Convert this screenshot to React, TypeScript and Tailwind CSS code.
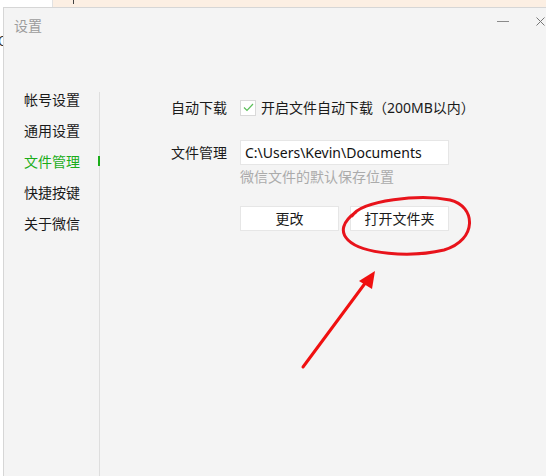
import React from "react";

const cjk = { fontFamily: '"Noto Sans CJK SC", "Noto Sans", sans-serif' };
const latin = { fontFamily: '"Noto Sans", "Noto Sans CJK SC", sans-serif' };

const menu = ["帐号设置", "通用设置", "文件管理", "快捷按键", "关于微信"];

function Annotation() {
  return (
    <svg
      className="pointer-events-none absolute left-0 top-0"
      width="546"
      height="476"
      viewBox="0 0 546 476"
    >
      <path
        d="M 352 216 C 362 200, 420 194, 450 200 C 476 206, 478 240, 444 250 C 410 258, 362 254, 348 240 C 340 232, 342 222, 356 212"
        fill="none"
        stroke="#e8131b"
        strokeWidth="3"
        strokeLinecap="round"
      />
      <line x1="303" y1="367" x2="366" y2="282" stroke="#f01010" strokeWidth="3" strokeLinecap="round" />
      <polygon points="375,271 359,281 372,289" fill="#f01010" />
    </svg>
  );
}

export default function App() {
  return (
    <div className="relative flex h-[476px] w-[546px] flex-col overflow-hidden bg-white text-[14px] text-[#1a1a1a]" style={cjk}>
      {/* window behind */}
      <div className="flex h-[7px]">
        <div className="w-[53px] border-r border-[#e2e2e2] bg-white" />
        <div className="flex-1 bg-[#fcefe3] pl-[20px]">
          <div className="h-[4px] w-px bg-[#444]" />
        </div>
      </div>

      <div className="flex flex-1">
        <div className="w-[3px] overflow-hidden bg-white">
          <div className="-ml-[2px] mt-[27px] text-[13px] leading-[14px] text-[#333]">C</div>
        </div>

        {/* settings window */}
        <div className="flex flex-1 flex-col border-l border-t border-[#d6d6d6] bg-[#f4f4f4]">
          <div className="flex h-[30px] items-start justify-between pl-[10px] pr-[1px] pt-[9px]">
            <span className="text-[14px] leading-[16px] text-[#9c9c9c]">设置</span>
            <div className="flex items-center gap-[27px] pt-[0px]">
              <div className="h-px w-[12px] bg-[#8a8a8a]" />
              <svg width="9" height="9" viewBox="0 0 9 9">
                <path d="M0.5 0.5 L8.5 8.5 M8.5 0.5 L0.5 8.5" stroke="#777" strokeWidth="1" />
              </svg>
            </div>
          </div>

          <div className="flex flex-1 pt-[54px]">
            <div className="flex w-[96px] flex-col gap-[17px] border-r border-[#dedede] pl-[20px]">
              {menu.map((m) => (
                <div
                  key={m}
                  className={`relative h-[14px] leading-[14px] ${m === "文件管理" ? "text-[#1aad19]" : "text-[#1a1a1a]"}`}
                >
                  {m}
                  {m === "文件管理" && (
                    <div className="absolute right-[-1px] top-[2px] h-[10px] w-[2px] bg-[#1aad19]" />
                  )}
                </div>
              ))}
            </div>

            <div className="flex flex-col pl-[71px] pt-[7px]">
              <div className="flex h-[17px] items-center">
                <span className="w-[69px]">自动下载</span>
                <div className="flex h-[16px] w-[16px] items-center justify-center border border-[#d9d9d9] bg-white">
                  <svg width="11" height="9" viewBox="0 0 11 9">
                    <path d="M1 4.5 L4 7.5 L10 1" fill="none" stroke="#5cbf5a" strokeWidth="1.2" />
                  </svg>
                </div>
                <span className="ml-[5px]">
                  开启文件自动下载（<span style={latin}>200MB</span>以内）
                </span>
              </div>

              <div className="mt-[24px] flex items-center">
                <span className="w-[69px]">文件管理</span>
                <div className="flex h-[25px] w-[209px] items-center border border-[#e6e6e6] bg-white pl-[4px] text-[#111]" style={latin}>
                  C:\Users\Kevin\Documents
                </div>
              </div>
              <div className="ml-[69px] mt-[3px] leading-[16px] text-[#ababab]">微信文件的默认保存位置</div>

              <div className="ml-[69px] mt-[22px] flex gap-[11px]">
                <button className="h-[25px] w-[99px] border border-[#e6e6e6] bg-white text-[14px] text-[#1a1a1a]">更改</button>
                <button className="h-[25px] w-[99px] border border-[#e6e6e6] bg-white text-[14px] text-[#1a1a1a]">打开文件夹</button>
              </div>
            </div>
          </div>
        </div>
      </div>

      <Annotation />
    </div>
  );
}
